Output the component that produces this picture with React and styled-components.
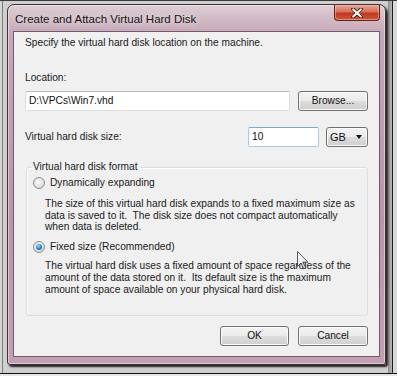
import React from 'react'
import styled, { createGlobalStyle } from 'styled-components'

const GlobalStyle = createGlobalStyle`
  html, body { margin: 0; padding: 0; }
  body {
    width: 397px;
    height: 376px;
    overflow: hidden;
    background: #e6e6e6;
    font-family: "Liberation Sans", Arial, sans-serif;
  }
  * { box-sizing: border-box; }
`

const firstDesc = [
  'The size of this virtual hard disk expands to a fixed maximum size as',
  'data is saved to it.  The disk size does not compact automatically',
  'when data is deleted.',
]

const secondDesc = [
  'The virtual hard disk uses a fixed amount of space regardless of the',
  'amount of the data stored on it.  Its default size is the maximum',
  'amount of space available on your physical hard disk.',
]

const App = () => {
  return (
    <>
      <GlobalStyle />
      <Desktop>
        <Window>
          <TitleBar>
            <Title>Create and Attach Virtual Hard Disk</Title>
            <CloseButton>
              <svg width="14" height="10" viewBox="0 0 14 10">
                <path d="M3 1 L11 9 M11 1 L3 9" stroke="#4a1c14" strokeWidth="3.6" strokeLinecap="round" fill="none" />
                <path d="M3.2 1.4 L10.8 8.6 M10.8 1.4 L3.2 8.6" stroke="#fff" strokeWidth="2" strokeLinecap="round" fill="none" />
              </svg>
            </CloseButton>
          </TitleBar>
          <Client>
            <Intro>Specify the virtual hard disk location on the machine.</Intro>
            <FieldLabel>Location:</FieldLabel>
            <Row>
              <TextBox $width={265}>D:\VPCs\Win7.vhd</TextBox>
              <Button $width={70}>Browse...</Button>
            </Row>
            <SizeRow>
              <Text>Virtual hard disk size:</Text>
              <TextBox $width={71} $focused>10</TextBox>
              <Combo>
                <span>GB</span>
                <Arrow />
              </Combo>
            </SizeRow>
            <Group>
              <Legend>Virtual hard disk format</Legend>
              <GroupBody>
                <Option>
                  <Radio />
                  <span>Dynamically expanding</span>
                </Option>
                <Description $top={9} $lineHeight={11.5}>
                  {firstDesc.map((line) => (
                    <Line key={line}>{line}</Line>
                  ))}
                </Description>
                <Option>
                  <Radio $checked />
                  <span>Fixed size (Recommended)</span>
                </Option>
                <Description $top={7} $lineHeight={12}>
                  {secondDesc.map((line) => (
                    <Line key={line}>{line}</Line>
                  ))}
                </Description>
              </GroupBody>
            </Group>
            <Buttons>
              <Button $width={69}>OK</Button>
              <Button $width={70}>Cancel</Button>
            </Buttons>
            <Cursor width="12" height="19" viewBox="0 0 12 19">
              <path d="M0.5 0.5 L0.5 15.5 L4 12 L6.6 18 L8.8 17 L6.2 11.2 L11 11.2 Z" fill="#f4f4f4" stroke="#333" strokeWidth="1" />
            </Cursor>
          </Client>
        </Window>
      </Desktop>
    </>
  )
}

export default App

const Desktop = styled.div`
  width: 397px;
  height: 374px;
  padding: 3px 0 0 7px;
  background: linear-gradient(to right, #d4d4d4 0, #d4d4d4 2px, #7d7d7d 2px, #7d7d7d 3px, #cfcfcf 3px, #cfcfcf 388px, #8e8e8e 388px, #b9b9b9 392px, #1c1c1c 392px, #1c1c1c 393px, #d9d9d9 393px);
  border-top: 1px solid #3a3a3a;
  border-bottom: 1px solid #111;
`

const Window = styled.div`
  width: 379px;
  height: 361px;
  display: flex;
  flex-direction: column;
  padding: 0 5px 7px 5px;
  border: 1px solid #3f3039;
  border-radius: 7px 7px 3px 3px;
  background: linear-gradient(to bottom, #ded0d7 0, #d2bcc7 12px, #c6a6b7 30px, #ba94a8 60%, #c49fb2 100%);
  box-shadow: 2px 2px 2px rgba(0, 0, 0, 0.85), inset 0 0 0 1px rgba(255, 255, 255, 0.45);
`

const TitleBar = styled.div`
  height: 26px;
  display: flex;
  justify-content: space-between;
  align-items: flex-start;
  padding-left: 2px;
`

const Title = styled.div`
  font-size: 11.5px;
  line-height: 14px;
  margin-top: 7px;
  color: #151515;
  text-shadow: 0 0 6px rgba(255, 255, 255, 0.9);
`

const CloseButton = styled.div`
  width: 46px;
  height: 16px;
  display: flex;
  align-items: center;
  justify-content: center;
  border: 1px solid #5b2418;
  border-top: none;
  border-radius: 0 0 4px 4px;
  background: linear-gradient(to bottom, #e8a493 0, #d7705a 45%, #c0381d 55%, #d1573a 100%);
  box-shadow: inset 0 0 0 1px rgba(255, 200, 180, 0.5);
`

const Client = styled.div`
  position: relative;
  flex: 1;
  display: flex;
  flex-direction: column;
  padding: 0 11px;
  background: #f0f0f0;
  border: 1px solid #6f5d68;
  font-size: 10.2px;
  line-height: 12px;
  color: #1a1a1a;
`

const Text = styled.div`
  white-space: nowrap;
`

const Intro = styled(Text)`
  margin-top: 5px;
`

const FieldLabel = styled(Text)`
  margin-top: 23px;
`

const Row = styled.div`
  display: flex;
  align-items: center;
  justify-content: space-between;
  margin-top: 6px;
  height: 21px;
`

const SizeRow = styled.div`
  display: flex;
  align-items: center;
  gap: 7px;
  margin-top: 16px;
  height: 20px;
  ${Text} {
    flex: 1;
  }
`

const TextBox = styled.div`
  width: ${(p) => p.$width}px;
  height: 20px;
  padding: 3px 0 0 3px;
  background: #fff;
  border: 1px solid ${(p) => (p.$focused ? '#a9c9e6' : '#dcdfe4')};
  border-top-color: ${(p) => (p.$focused ? '#7ea9d2' : '#b7b9be')};
  border-radius: 2px;
  color: #111;
`

const Button = styled.div`
  width: ${(p) => p.$width}px;
  height: 20px;
  display: flex;
  align-items: center;
  justify-content: center;
  border: 1px solid #707070;
  border-radius: 3px;
  background: linear-gradient(to bottom, #f3f3f3 0%, #ebebeb 48%, #dddddd 52%, #cfcfcf 100%);
  box-shadow: inset 0 0 0 1px #fbfbfb;
  color: #111;
`

const Combo = styled(Button)`
  width: 42px;
  justify-content: space-between;
  padding: 0 5px 0 3px;
  font-size: 11px;
`

const Arrow = styled.i`
  width: 0;
  height: 0;
  border-left: 3.5px solid transparent;
  border-right: 3.5px solid transparent;
  border-top: 4px solid #111;
`

const Group = styled.fieldset`
  margin: 14px 0 0 1px;
  padding: 0 0 0 4px;
  border: 1px solid #d5dfe5;
  border-radius: 3px;
  box-shadow: inset 1px 1px 0 #fff;
  min-width: 0;
`

const Legend = styled.legend`
  padding: 0 2px;
  line-height: 12px;
  white-space: nowrap;
`

const GroupBody = styled.div`
  display: flex;
  flex-direction: column;
  padding: 4px 0 11px 2px;
`

const Option = styled.div`
  display: flex;
  align-items: center;
  gap: 5px;
  height: 12px;
  white-space: nowrap;
`

const Radio = styled.span`
  width: 12px;
  height: 12px;
  border-radius: 50%;
  border: 1px solid #8b8e91;
  display: flex;
  align-items: center;
  justify-content: center;
  background: radial-gradient(circle at 45% 40%, #fbfbfb 0, #e2e2e2 55%, #cfcfcf 100%);
  &::after {
    content: '';
    display: ${(p) => (p.$checked ? 'block' : 'none')};
    width: 6px;
    height: 6px;
    border-radius: 50%;
    background: radial-gradient(circle at 40% 35%, #a8e4ff 0, #2a8fd6 45%, #0b4f93 100%);
  }
`

const Description = styled.div`
  margin: ${(p) => p.$top}px 0 8px 12px;
  line-height: ${(p) => p.$lineHeight}px;
`

const Line = styled.div`
  white-space: pre;
`

const Buttons = styled.div`
  display: flex;
  justify-content: flex-end;
  gap: 9px;
  margin-top: 10px;
`

const Cursor = styled.svg`
  position: absolute;
  left: 283px;
  top: 219px;
  opacity: 0.8;
`
